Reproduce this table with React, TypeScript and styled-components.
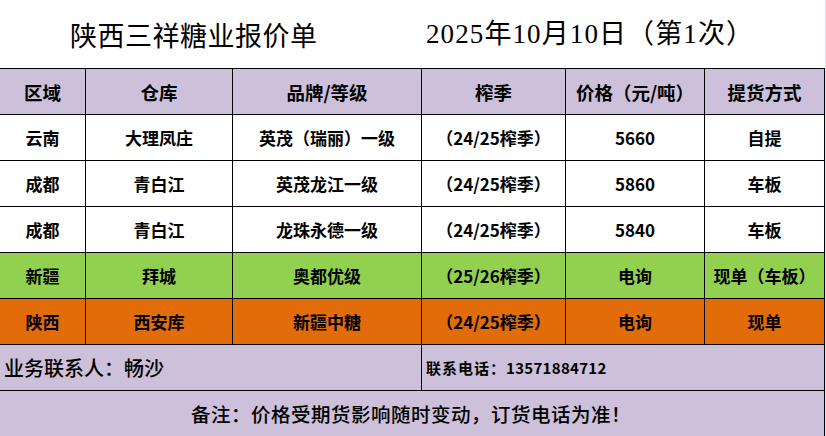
import styled, { createGlobalStyle } from "styled-components";

const GlobalStyle = createGlobalStyle`
  html, body {
    margin: 0;
    padding: 0;
    background: #fff;
  }
  body {
    font-family: "Noto Sans CJK SC", "Liberation Sans", sans-serif;
    color: #000;
  }
`;

type Row = {
  area: string;
  store: string;
  brand: string;
  season: string;
  price: string;
  pickup: string;
  tone?: "green" | "orange";
};

const rows: Row[] = [
  { area: "云南", store: "大理凤庄", brand: "英茂（瑞丽）一级", season: "（24/25榨季）", price: "5660", pickup: "自提" },
  { area: "成都", store: "青白江", brand: "英茂龙江一级", season: "（24/25榨季）", price: "5860", pickup: "车板" },
  { area: "成都", store: "青白江", brand: "龙珠永德一级", season: "（24/25榨季）", price: "5840", pickup: "车板" },
  { area: "新疆", store: "拜城", brand: "奥都优级", season: "（25/26榨季）", price: "电询", pickup: "现单（车板）", tone: "green" },
  { area: "陕西", store: "西安库", brand: "新疆中糖", season: "（24/25榨季）", price: "电询", pickup: "现单", tone: "orange" },
];

const heads = ["区域", "仓库", "品牌/等级", "榨季", "价格（元/吨）", "提货方式"];

export default function App() {
  return (
    <>
      <GlobalStyle />
      <Page>
        <TitleBar>
          <Title>陕西三祥糖业报价单</Title>
          <DateLine>2025年10月10日（第1次）</DateLine>
        </TitleBar>

        <Sheet>
          {heads.map((h) => (
            <HeadCell key={h}>{h}</HeadCell>
          ))}

          {rows.map((r, i) =>
            [r.area, r.store, r.brand, r.season, r.price, r.pickup].map((v, j) => (
              <Cell key={`${i}-${j}`} $tone={r.tone}>
                {v}
              </Cell>
            ))
          )}

          <ContactCell $span={3}>业务联系人：畅沙</ContactCell>
          <PhoneCell $span={3}>
            联系电话：<Digits>13571884712</Digits>
          </PhoneCell>
          <NoteCell>备注：价格受期货影响随时变动，订货电话为准！</NoteCell>
        </Sheet>
      </Page>
    </>
  );
}

const Page = styled.div`
  width: 825px;
  height: 436px;
  border-right: 1px solid #dfe4ec;
  overflow: hidden;
`;

const TitleBar = styled.div`
  height: 68px;
  display: grid;
  grid-template-columns: 356px 1fr;
  align-items: center;
  padding-left: 70px;
  box-sizing: border-box;
  font-family: "Liberation Serif", "Noto Sans CJK SC", serif;
  font-size: 27px;
`;

const Title = styled.div`
  font-family: "Noto Sans CJK SC", serif;
  font-weight: 400;
  line-height: 1;
  letter-spacing: 0.5px;
  padding-top: 1px;
`;

const DateLine = styled.div`
  line-height: 1;
  letter-spacing: 1.1px;
  padding-top: 1px;
`;

const Sheet = styled.div`
  display: grid;
  grid-template-columns: 85px 146px 188px 143px 138px 119px;
  grid-auto-rows: 45px;
  gap: 1px;
  padding: 1px 1px 0 0;
  background: #000;
`;

const BaseCell = styled.div`
  display: flex;
  align-items: center;
  justify-content: center;
  white-space: nowrap;
`;

const HeadCell = styled(BaseCell)`
  background: #ccc0da;
  font-size: 18.5px;
  font-weight: 700;
`;

const toneBg = { green: "#92d050", orange: "#e26b0a" } as const;

const Cell = styled(BaseCell)<{ $tone?: "green" | "orange" }>`
  background: ${(p) => (p.$tone ? toneBg[p.$tone] : "#fff")};
  font-size: 17px;
  font-weight: 700;
`;

const ContactCell = styled(BaseCell)<{ $span: number }>`
  grid-column: span ${(p) => p.$span};
  justify-content: flex-start;
  padding-left: 4px;
  background: #ccc0da;
  font-size: 20px;
  font-weight: 500;
`;

const PhoneCell = styled(ContactCell)`
  padding-left: 4px;
  font-size: 15px;
  font-weight: 700;
  letter-spacing: 1px;
`;

const Digits = styled.span`
  letter-spacing: 0.3px;
`;

const NoteCell = styled(BaseCell)`
  grid-column: 1 / -1;
  background: #ccc0da;
  font-size: 19.5px;
  font-weight: 500;
  letter-spacing: 0.5px;
  padding-right: 2px;
`;
